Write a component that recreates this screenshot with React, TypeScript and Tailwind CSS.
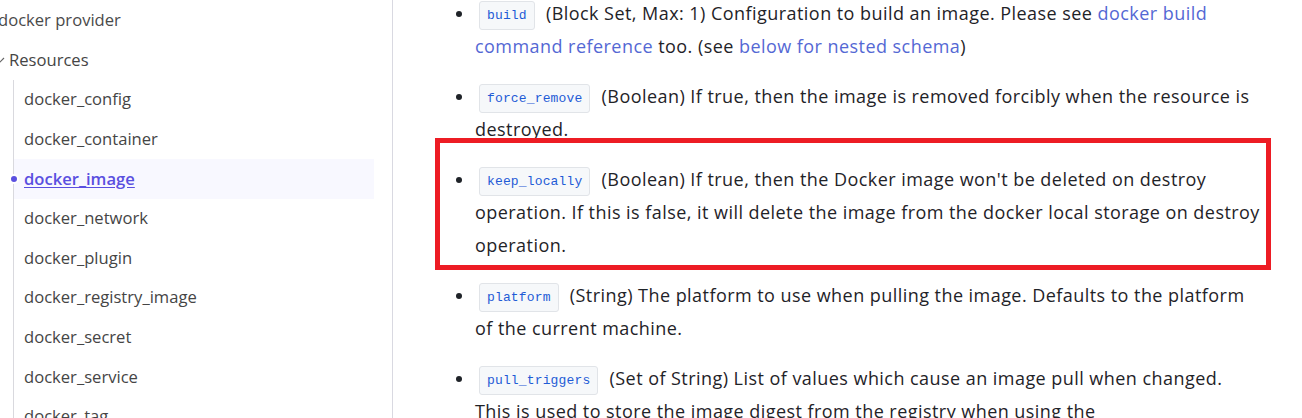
import React from 'react';

const sidebarItems = [
  'docker_config',
  'docker_container',
  'docker_image',
  'docker_network',
  'docker_plugin',
  'docker_registry_image',
  'docker_secret',
  'docker_service',
  'docker_tag',
];

function Code({ children }: { children: React.ReactNode }) {
  return (
    <code className="ml-1 mr-[6px] inline-block rounded-[3px] border border-[#e1e4e8] bg-[#f6f8fa] px-[7px] py-[5px] align-[1px] font-['Liberation_Mono',monospace] text-[13px] leading-[17px] tracking-[0.15px] text-[#1f5bd6]">
      {children}
    </code>
  );
}

function Link({ children }: { children: React.ReactNode }) {
  return <a className="cursor-pointer text-[#5468d4]">{children}</a>;
}

export default function App() {
  return (
    <div className="flex h-[418px] w-full overflow-hidden bg-white font-['Open_Sans',sans-serif]">
      {/* Sidebar */}
      <aside className="w-[393px] shrink-0 border-r border-[#d9d9e1] pr-[18px] text-[16.6px] text-[#454545]">
        <div className="-ml-[2px] flex h-[40px] items-center text-[#4a4a4a]">docker provider</div>
        <div className="flex h-[40px] items-center">
          <svg className="-ml-[6px] mr-[3px] h-[12px] w-[12px]" viewBox="0 0 12 12" fill="none" stroke="#666" strokeWidth="1.2">
            <path d="M2 4l4 4 4-4" />
          </svg>
          <span>Resources</span>
        </div>
        <ul className="ml-[13px] border-l border-[#d9d9de]">
          {sidebarItems.map((item) => {
            const active = item === 'docker_image';
            return (
              <li
                key={item}
                className={`relative flex h-[39.6px] items-center pl-[10px] ${active ? 'bg-[#f8f8ff]' : ''}`}
              >
                {active && (
                  <span className="absolute -left-[5.5px] top-1/2 h-[10px] w-[10px] -translate-y-1/2 rounded-full border-2 border-white bg-[#5a4fe0]" />
                )}
                <span className={active ? 'font-semibold text-[#5a4fe0] underline underline-offset-2' : ''}>{item}</span>
              </li>
            );
          })}
        </ul>
      </aside>

      {/* Main content */}
      <main className="flex-1 pl-[82px] pr-[41px] text-[18px] leading-[33px] tracking-[0.45px] text-[#1f2328]">
        <ul className="-mt-[3px] list-disc">
          <li className="mb-[17px]">
            <Code>build</Code> (Block Set, Max: 1) Configuration to build an image. Please see{' '}
            <Link>docker build command reference</Link> too. (see <Link>below for nested schema</Link>)
          </li>
          <li className="mb-[17px]">
            <Code>force_remove</Code> (Boolean) If true, then the image is removed forcibly when the resource is
            destroyed.
          </li>
          <li className="relative mb-[17px]">
            <span className="pointer-events-none absolute -left-[40px] -right-[10px] -top-[25px] -bottom-[8px] border-[5px] border-[#ed1c24]" />
            <Code>keep_locally</Code> (Boolean) If true, then the Docker image won't be deleted on destroy
            operation. If this is false, it will delete the image from the docker local storage on destroy
            operation.
          </li>
          <li className="mb-[17px]">
            <Code>platform</Code> (String) The platform to use when pulling the image. Defaults to the platform of
            the current machine.
          </li>
          <li className="mb-[17px]">
            <Code>pull_triggers</Code> (Set of String) List of values which cause an image pull when changed. This
            is used to store the image digest from the registry when using the docker_registry_image data source to
            trigger an image update.
          </li>
        </ul>
      </main>
    </div>
  );
}
